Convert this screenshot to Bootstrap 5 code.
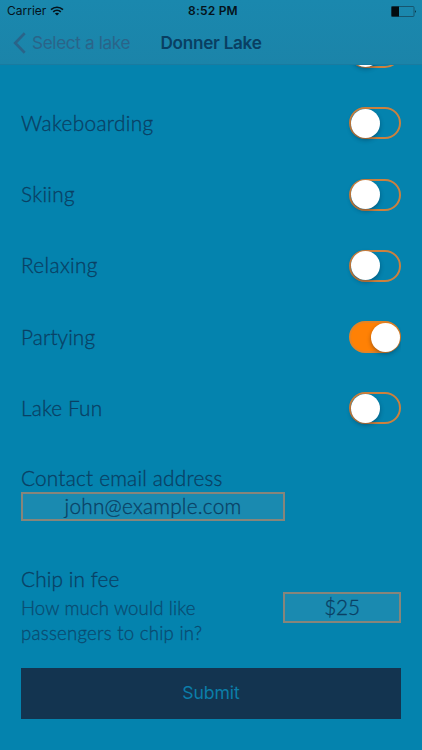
<!DOCTYPE html>
<html lang="en">
<head>
<meta charset="utf-8">
<meta name="viewport" content="width=device-width, initial-scale=1">
<title>Donner Lake</title>
<link href="https://cdn.jsdelivr.net/npm/bootstrap@5.3.0/dist/css/bootstrap.min.css" rel="stylesheet">
<style>
  body { width: 422px; height: 750px; background: #0483ae; color: #0a4064; font-family: Lato, sans-serif; font-weight: 300; font-size: 20.8px; line-height: 26px; }
  .topbar { height: 65px; background: linear-gradient(#1a88ae, #1b84a9); border-bottom: 1px solid #197ba0; font-family: Inter, sans-serif; font-weight: 400; }
  .status { height: 22px; color: #05131b; font-size: 12px; line-height: 22px; padding: 0 5px 0 7px; }
  .status-time { font-weight: 600; letter-spacing: .2px; }
  .titles { height: 42px; font-size: 17.2px; line-height: 42px; padding-left: 13px; }
  .back-link { color: #2a6489; width: 147.5px; }
  .back-text { margin-left: 6px; letter-spacing: -.36px; }
  .page-title { font-weight: 600; color: #093f62; letter-spacing: -.3px; }
  .form-body { width: 380px; margin-left: 21px; -webkit-text-stroke: .3px; }
  .activities { margin-top: -48.4px; }
  .activity { height: 71.25px; }
  .activity > span { margin-top: -1px; }
  .toggle { width: 52px; height: 32px; border: 2px solid #cd813e; border-radius: 16px; }
  .knob { width: 29px; height: 29px; border-radius: 50%; background: #fff; box-shadow: 0 2px 4px rgba(0,20,40,.35); margin: -.5px 0 0 -.5px; }
  .toggle.on { background: #ff8105; border-color: #e58324; }
  .toggle.on .knob { margin: -.5px -.5px 0 auto; }
  .field, .field:focus { border: 2px solid #87857a; border-radius: 0; background: #1a8ab0; color: #0a4064; text-align: center; padding: 0; font-weight: 300; font-size: 20.8px; line-height: 25px; -webkit-text-stroke: .3px; }
  .email-group { padding-top: 20.6px; height: 121.5px; }
  .email-field { width: 264px; height: 29px; margin-top: 1px; padding-bottom: 1px; }
  .fee-group { height: 102.4px; }
  .fee-field, .fee-field:focus { width: 118px; height: 31px; margin-top: 26px; padding-bottom: 2px; }
  .hint { font-size: 18.6px; line-height: 25px; color: #0a4b71; }
  .submit-btn { height: 51px; background: #133450; color: #0b7ea9; border-radius: 0; font-family: Inter, sans-serif; font-size: 17.6px; letter-spacing: -.1px; -webkit-text-stroke: 0; }
  .w-wake { letter-spacing: .35px; } .w-ski { letter-spacing: .3px; } .w-relax { letter-spacing: .35px; }
  .w-party { letter-spacing: .1px; } .w-fun { letter-spacing: .15px; } .w-contact { letter-spacing: .2px; }
  .w-email { letter-spacing: .22px; } .w-chip { letter-spacing: .1px; } .w-h1 { letter-spacing: .13px; } .w-h2 { letter-spacing: .25px; } .w-fee { letter-spacing: -.2px; }
</style>
<script src="https://cdn.jsdelivr.net/npm/bootstrap@5.3.0/dist/js/bootstrap.bundle.min.js"></script>
</head>
<body class="d-flex flex-column overflow-hidden">
<header class="topbar flex-shrink-0">
  <div class="status d-flex align-items-center position-relative">
    <span>Carrier</span>
    <svg class="ms-1" width="14" height="10" viewBox="0 0 14 10" fill="none" stroke="#05131b" stroke-width="1.6"><path d="M1 3.6C4.4.4 9.6.4 13 3.6M3.2 5.8c2.2-2 5.4-2 7.6 0"/><path d="M7 9.6 4.9 7.5c1.2-1.1 3-1.1 4.2 0z" fill="#05131b" stroke="none"/></svg>
    <span class="status-time position-absolute start-50 translate-middle-x ps-1">8:52&nbsp;PM</span>
    <svg class="ms-auto" width="26" height="11" viewBox="0 0 26 11"><rect x=".5" y=".5" width="22.5" height="10" rx="1" fill="none" stroke="#17566f"/><path d="M.5.5H8v10H.5z" fill="#020b10"/><path d="M24 4q1.6 1.5 0 3z" fill="#05131b"/></svg>
  </div>
  <nav class="titles d-flex align-items-center">
    <a class="back-link d-flex align-items-center text-decoration-none" href="#">
      <svg width="13" height="22" viewBox="0 0 13 22" fill="none" stroke="#2a6489" stroke-width="2.7"><path d="M11.7 1.3 2.2 11l9.5 9.7"/></svg>
      <span class="back-text">Select a lake</span>
    </a>
    <span class="page-title">Donner Lake</span>
  </nav>
</header>
<main class="flex-grow-1 overflow-hidden">
  <form class="form-body">
    <div class="overflow-hidden">
      <div class="activities">
        <div class="activity d-flex align-items-center justify-content-between"><span></span><div class="toggle"><div class="knob"></div></div></div>
        <div class="activity d-flex align-items-center justify-content-between"><span class="w-wake">Wakeboarding</span><div class="toggle"><div class="knob"></div></div></div>
        <div class="activity d-flex align-items-center justify-content-between"><span class="w-ski">Skiing</span><div class="toggle"><div class="knob"></div></div></div>
        <div class="activity d-flex align-items-center justify-content-between"><span class="w-relax">Relaxing</span><div class="toggle"><div class="knob"></div></div></div>
        <div class="activity d-flex align-items-center justify-content-between"><span class="w-party">Partying</span><div class="toggle on"><div class="knob"></div></div></div>
        <div class="activity d-flex align-items-center justify-content-between"><span class="w-fun">Lake Fun</span><div class="toggle"><div class="knob"></div></div></div>
      </div>
    </div>
    <div class="email-group">
      <label class="d-block w-contact" for="email">Contact email address</label>
      <input id="email" class="form-control field email-field w-email" value="john@example.com">
    </div>
    <div class="fee-group d-flex justify-content-between align-items-start">
      <div>
        <label class="d-block w-chip" for="fee">Chip in fee</label>
        <div class="hint pt-1"><span class="w-h1">How much would like</span><br><span class="w-h2">passengers to chip in?</span></div>
      </div>
      <input id="fee" class="form-control field fee-field w-fee" value="$25">
    </div>
    <button type="button" class="btn submit-btn w-100 p-0 border-0 d-block">Submit</button>
  </form>
</main>
</body>
</html>
